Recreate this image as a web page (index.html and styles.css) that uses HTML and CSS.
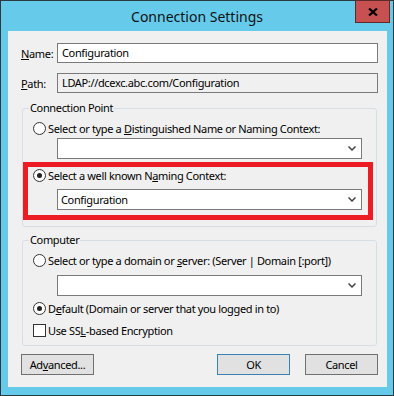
FILE: index.html
```html
<!DOCTYPE html>
<html lang="en">
<head>
  <meta charset="UTF-8">
  <title>Connection Settings</title>
  <link rel="stylesheet" href="styles.css">
</head>
<body>
  <div class="window">
    <div class="titlebar">
      <span class="caption">Connection Settings</span>
    </div>
    <div class="close">
      <svg width="10" height="8" viewBox="0 0 10 8"><path d="M1 0.5 L9 7.5 M9 0.5 L1 7.5" stroke="#000" stroke-width="2.2"/></svg>
    </div>

    <div class="client">
      <div class="field">
        <span class="label"><u>N</u>ame:</span>
        <div class="textbox">Configuration</div>
      </div>
      <div class="field path">
        <span class="label"><u>P</u>ath:</span>
        <div class="textbox readonly">LDAP://dcexc.abc.com/Configuration</div>
      </div>

      <div class="group first">
        <div class="group-title">Connection Point</div>
        <div class="opt"><span class="radio"></span><span>Select or type a <u>D</u>istinguished Name or Naming Context:</span></div>
        <div class="combo"><span></span>
          <svg width="8" height="5" viewBox="0 0 8 5"><path d="M0.5 0.5 L4 4 L7.5 0.5" fill="none" stroke="#444" stroke-width="1.5"/></svg>
        </div>
        <div class="mark">
          <div class="opt"><span class="radio checked"></span><span>Select a well known N<u>a</u>ming Context:</span></div>
          <div class="combo"><span>Configuration</span>
            <svg width="8" height="5" viewBox="0 0 8 5"><path d="M0.5 0.5 L4 4 L7.5 0.5" fill="none" stroke="#444" stroke-width="1.5"/></svg>
          </div>
        </div>
      </div>

      <div class="group second">
        <div class="group-title">Computer</div>
        <div class="opt"><span class="radio"></span><span>Select or type a domain or <u>s</u>erver: (Server | Domain [:port])</span></div>
        <div class="combo"><span></span>
          <svg width="8" height="5" viewBox="0 0 8 5"><path d="M0.5 0.5 L4 4 L7.5 0.5" fill="none" stroke="#444" stroke-width="1.5"/></svg>
        </div>
        <div class="opt default"><span class="radio checked"></span><span>D<u>e</u>fault (Domain or server that you logged in to)</span></div>
        <div class="opt ssl"><span class="check"></span><span>Use SS<u>L</u>-based Encryption</span></div>
      </div>

      <div class="buttons">
        <button class="btn">Ad<u>v</u>anced...</button>
        <span class="spacer"></span>
        <button class="btn primary">OK</button>
        <button class="btn">Cancel</button>
      </div>
    </div>
  </div>
</body>
</html>
```

FILE: styles.css
```css
body {
  margin: 0;
  background: #f0f0f0;
  font-family: 'Noto Sans', sans-serif;
  font-size: 11px;
  letter-spacing: -0.35px;
  color: #000;
}

.window {
  position: relative;
  width: 394px;
  height: 396px;
  box-sizing: border-box;
  border: 1px solid #2b3a40;
  background: #66cbea;
  display: flex;
  flex-direction: column;
}

.titlebar {
  height: 30px;
  display: flex;
  align-items: center;
  justify-content: center;
}

.caption {
  font-size: 14px;
  letter-spacing: 0;
  color: #111;
  margin-top: 1px;
}

.close {
  position: absolute;
  top: -1px;
  left: 354px;
  width: 33px;
  height: 21px;
  background: #c75050;
  border: 1px solid #5e2a2a;
  display: flex;
  align-items: center;
  justify-content: center;
}

.client {
  margin: 0 6px 0 7px;
  height: 356px;
  box-sizing: border-box;
  background: #f0f0f0;
  padding: 12px 9px 0 13px;
}

.field {
  display: flex;
  align-items: center;
  height: 20px;
}

.field.path {
  margin-top: 10px;
}

.label {
  width: 36px;
}

.textbox {
  flex: 1;
  height: 20px;
  box-sizing: border-box;
  border: 1px solid #7a7a7a;
  background: #fff;
  padding: 0 4px;
  line-height: 18px;
}

.textbox.readonly {
  background: #f0f0f0;
}

u {
  text-decoration: underline;
  text-underline-offset: 1px;
}

.group {
  margin: 0 1px;
  border: 1px solid #d5dfe5;
  border-radius: 3px;
}

.group.first {
  margin-top: 15px;
  padding-bottom: 6px;
}

.group.second {
  margin-top: 13px;
  padding-bottom: 7px;
}

.group-title {
  margin: -9px 0 0 6px;
  height: 16px;
  line-height: 16px;
  padding: 0 1px;
  width: fit-content;
  background: #f0f0f0;
}

.opt {
  display: flex;
  align-items: center;
  height: 16px;
  margin-top: 4px;
  padding-left: 10px;
}

.radio {
  width: 13px;
  height: 13px;
  box-sizing: border-box;
  border: 1px solid #333;
  border-radius: 50%;
  background: #fff;
  margin-right: 2px;
  display: flex;
  align-items: center;
  justify-content: center;
}

.radio.checked::after {
  content: "";
  width: 5px;
  height: 5px;
  border-radius: 50%;
  background: #222;
}

.check {
  width: 13px;
  height: 13px;
  box-sizing: border-box;
  border: 1px solid #333;
  background: #fff;
  margin-right: 2px;
}

.combo {
  width: 305px;
  height: 21px;
  box-sizing: border-box;
  margin: 2px 0 0 34px;
  border: 1px solid #7a7a7a;
  background: #fff;
  display: flex;
  align-items: center;
  justify-content: space-between;
  padding: 0 5px 0 3px;
}

.mark {
  margin: 3px 3px 0 0;
  height: 58px;
  box-sizing: border-box;
  border: 5px solid #ed1c24;
}

.mark .opt {
  margin-top: 0;
  padding-left: 5px;
}

.mark .combo {
  margin: 6px 0 0 29px;
}

.second .combo {
  margin-top: 7px;
}

.opt.ssl {
  margin-top: 6px;
}

.buttons {
  display: flex;
  margin-top: 8px;
  gap: 15px;
}

.spacer {
  flex: 1;
}

.btn {
  width: 73px;
  height: 21px;
  border: 1px solid #707070;
  background: #e1e1e1;
  font-family: 'Noto Sans', sans-serif;
  font-size: 11px;
  letter-spacing: -0.35px;
  color: #000;
  padding: 0;
}

.btn.primary {
  border-color: #3c7fb1;
}
```
